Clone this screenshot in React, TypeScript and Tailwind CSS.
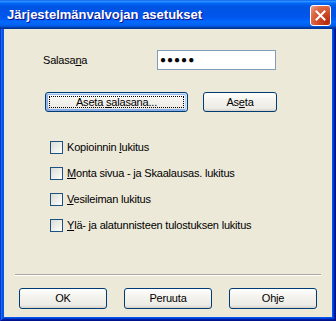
import React from "react";

function XPButton({
  children,
  className = "",
  isDefault = false,
}: {
  children: React.ReactNode;
  className?: string;
  isDefault?: boolean;
}) {
  return (
    <div
      className={`relative flex items-center justify-center rounded-[3px] border border-[#003C74] bg-[linear-gradient(180deg,#FFFFFF_0%,#F4F3EE_40%,#ECEBE6_85%,#D6D0C5_100%)] text-black ${
        isDefault
          ? "shadow-[inset_-1px_1px_#CEE7FF,inset_1px_2px_#98B8EA,inset_-2px_2px_#BCD4F6,inset_1px_-1px_#89ADE4,inset_2px_-2px_#89ADE4]"
          : ""
      } ${className}`}
    >
      {isDefault && (
        <div className="pointer-events-none absolute inset-[3px] border border-dotted border-black" />
      )}
      <span className="relative leading-[13px]">{children}</span>
    </div>
  );
}

function Checkbox({ children }: { children: React.ReactNode }) {
  return (
    <div className="flex h-[13px] items-center gap-[4px]">
      <div className="h-[13px] w-[13px] border border-[#1C5180] bg-[linear-gradient(135deg,#DCDCD7_0%,#F0F0EC_60%,#FFFFFF_100%)]" />
      <span className="leading-[13px]">{children}</span>
    </div>
  );
}

export default function App() {
  return (
    <div className="h-[321px] w-[336px] overflow-hidden font-['Liberation_Sans',Arial,sans-serif] text-[11px] tracking-[-0.2px] text-black">
      <div className="flex h-full w-full flex-col bg-[#0055EA] shadow-[inset_1px_0_#0831D9,inset_-1px_0_#00138C,inset_0_-1px_#00138C,inset_2px_0_#166AEE,inset_-2px_0_#001EA0,inset_0_-2px_#001EA0,inset_3px_0_#0855DD,inset_-3px_0_#003BDA,inset_0_-3px_#003BDA]">
        {/* Title bar */}
        <div className="flex h-[29px] shrink-0 items-start justify-between bg-[linear-gradient(180deg,#0058EE_0%,#3593FF_4%,#288EFF_6%,#127DFF_8%,#036FFC_10%,#0262EE_14%,#0057E5_20%,#0054E3_24%,#0055EB_56%,#005BF5_66%,#026AFE_76%,#0062EF_86%,#0052D6_92%,#0040AB_94%,#003092_100%)] pl-[7px] pr-[5px]">
          <span className="mt-[7px] text-[13px] font-bold leading-[16px] tracking-normal text-white [text-shadow:1px_1px_#0F1089]">
            Järjestelmänvalvojan asetukset
          </span>
          <div className="mt-[5px] flex h-[21px] w-[21px] items-center justify-center rounded-[3px] border border-white bg-[radial-gradient(circle_at_85%_85%,#B32A0C_0%,#D04A26_40%,#DE6A48_70%,#E9A58C_100%)]">
            <svg width="13" height="13" viewBox="0 0 13 13">
              <path
                d="M2.5 2.5 L10.5 10.5 M10.5 2.5 L2.5 10.5"
                stroke="white"
                strokeWidth="2"
                strokeLinecap="square"
              />
            </svg>
          </div>
        </div>

        {/* Client area */}
        <div className="mx-[4px] flex h-[288px] flex-col bg-[#ECE9D8]">
          <div className="ml-[39px] mt-[21px] flex h-[20px] items-center">
            <span className="w-[114px] leading-[13px]">
              Salasa<u className="underline-offset-[1px]">n</u>a
            </span>
            <div className="flex h-[20px] w-[119px] items-center border border-[#7F9DB9] bg-white pl-[2px]">
              <span className="text-[10px] leading-[10px] tracking-[1px]">●●●●●</span>
            </div>
          </div>

          <div className="ml-[41px] mt-[22px] flex gap-[15px]">
            <XPButton isDefault className="h-[20px] w-[143px]">
              Aseta <u className="underline-offset-[1px]">s</u>alasana...
            </XPButton>
            <XPButton className="h-[20px] w-[74px]">
              As<u className="underline-offset-[1px]">e</u>ta
            </XPButton>
          </div>

          <div className="ml-[46px] mt-[29px] flex flex-col gap-[13px]">
            <Checkbox>
              Kopioinnin <u className="underline-offset-[1px]">l</u>ukitus
            </Checkbox>
            <Checkbox>
              <u className="underline-offset-[1px]">M</u>onta sivua - ja Skaalausas. lukitus
            </Checkbox>
            <Checkbox>
              <u className="underline-offset-[1px]">V</u>esileiman lukitus
            </Checkbox>
            <Checkbox>
              <u className="underline-offset-[1px]">Y</u>lä- ja alatunnisteen tulostuksen lukitus
            </Checkbox>
          </div>

          <div className="ml-[11px] mt-[42px] h-[2px] w-[306px] border-b border-t border-b-white border-t-[#ACA899]" />

          <div className="ml-[15px] mt-[12px] flex gap-[17px]">
            <XPButton className="h-[21px] w-[88px]">OK</XPButton>
            <XPButton className="h-[21px] w-[88px]">Peruuta</XPButton>
            <XPButton className="h-[21px] w-[88px]">Ohje</XPButton>
          </div>
        </div>
      </div>
    </div>
  );
}
